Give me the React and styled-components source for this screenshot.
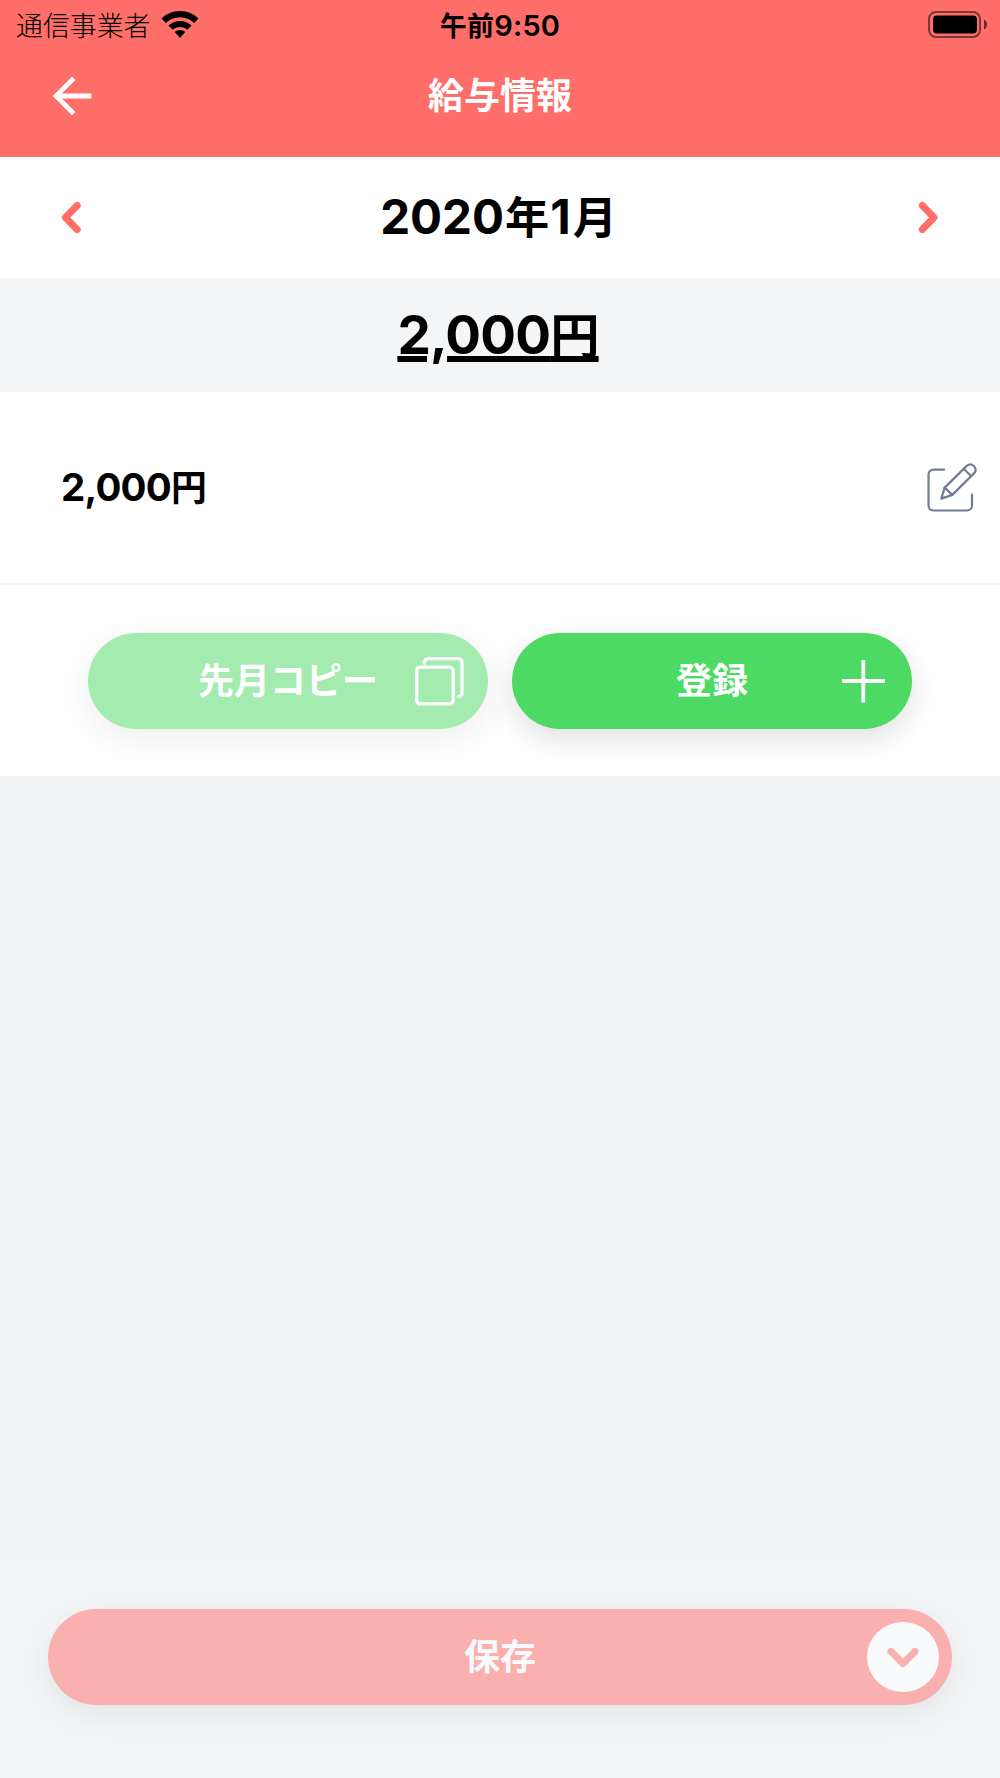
import React from "react";
import styled, { createGlobalStyle } from "styled-components";

const GlobalStyle = createGlobalStyle`
  * {
    box-sizing: border-box;
  }
  body {
    margin: 0;
    background: #f3f4f6;
    font-family: "Inter", "Noto Sans CJK JP", sans-serif;
    color: #000;
  }
  button {
    border: 0;
    padding: 0;
    background: none;
    font: inherit;
    color: inherit;
    cursor: pointer;
  }
  svg {
    display: block;
  }
`;

const Screen = styled.div`
  display: flex;
  flex-direction: column;
  width: 1000px;
  height: 1778px;
  overflow: hidden;
  background: #f3f4f6;
`;

const Header = styled.header`
  height: 157px;
  background: #ff6e69;
`;

const StatusBar = styled.div`
  display: grid;
  grid-template-columns: 1fr auto 1fr;
  align-items: center;
  height: 50px;
  padding: 0 13px 2px 16px;
  line-height: 44px;
`;

const Carrier = styled.div`
  display: flex;
  align-items: center;
  gap: 11px;
`;

const CarrierName = styled.span`
  padding-top: 2px;
  font-size: 26.9px;
  font-weight: 300;
`;

const Clock = styled.div`
  padding: 4px 3px 0 0;
  font-size: 29px;
  font-weight: 600;
  letter-spacing: 0.2px;
`;

/* kanji next to digits are set a little smaller than the digits */
const Kanji = styled.span`
  margin: 0 ${(props) => props.$gap || 0}px;
  font-size: 0.93em;
`;

const BatteryBox = styled.div`
  display: flex;
  justify-content: flex-end;
`;

const NavBar = styled.div`
  display: grid;
  grid-template-columns: 58px 1fr 58px;
  align-items: center;
  height: 92px;
  padding: 0 43px;
`;

const NavTitle = styled.h1`
  margin: 0;
  font-size: 36px;
  line-height: 50px;
  font-weight: 600;
  text-align: center;
  color: #fff;
`;

const MonthBar = styled.div`
  display: flex;
  align-items: center;
  justify-content: space-between;
  height: 121px;
  padding: 0 61px;
  background: #fff;
`;

const Month = styled.div`
  padding-right: 1px;
  font-size: 47.5px;
  line-height: 60px;
  font-weight: 700;
`;

const Total = styled.div`
  height: 114px;
  padding: 24px 4px 0 0;
  background: #f4f5f7;
  text-align: center;
  font-size: 53px;
  line-height: 66px;
  font-weight: 700;
  letter-spacing: -0.8px;
  text-decoration: underline;
  text-decoration-thickness: 6px;
  text-underline-offset: 2px;
`;

const Row = styled.div`
  display: flex;
  align-items: center;
  justify-content: space-between;
  height: 193px;
  padding: 0 23px 0 61px;
  background: #fff;
  border-bottom: 2px solid #f3f4f5;
`;

const Amount = styled.div`
  font-size: 38.5px;
  line-height: 50px;
  font-weight: 700;
  letter-spacing: -0.8px;
`;

const Actions = styled.div`
  display: flex;
  justify-content: center;
  gap: 24px;
  height: 191px;
  padding-top: 48px;
  background: #fff;
`;

const PillButton = styled.button`
  display: grid;
  grid-template-columns: 1fr auto 1fr;
  align-items: center;
  width: ${(props) => props.$width}px;
  height: 96px;
  padding: 0 ${(props) => props.$inset}px;
  border-radius: 48px;
  background: ${(props) => props.$color};
  box-shadow: 0 10px 30px rgba(0, 0, 0, 0.12);
  opacity: ${(props) => (props.disabled ? 0.5 : 1)};
  color: #fff;
`;

const PillLabel = styled.span`
  grid-column: 2;
  padding-bottom: 1px;
  font-size: 36px;
  line-height: 50px;
  font-weight: 600;
`;

const PillIcon = styled.span`
  grid-column: 3;
  justify-self: end;
`;

const Footer = styled.footer`
  display: flex;
  justify-content: center;
  height: 218px;
  margin-top: auto;
  padding-top: 49px;
  background: #f4f5f7;
`;

const WifiIcon = () => (
  <svg width="38" height="28" viewBox="0 0 38 28">
    <path d="M19 0C12 0 5.600 2.700.6 7.600L4.900 12C8.700 8.300 13.600 6.200 19 6.200S29.300 8.300 33.100 12l4.300-4.400C32.400 2.700 26 0 19 0z" />
    <path d="M19 9.900c-4.400 0-8.500 1.700-11.600 4.700l4.200 4.200c2-1.900 4.600-2.900 7.400-2.900s5.400 1 7.400 2.900l4.200-4.200c-3.100-3-7.200-4.700-11.600-4.700z" />
    <path d="M19 19c-1.900 0-3.700.7-5.200 1.900L19 27l5.200-6.100C22.700 19.700 20.900 19 19 19z" />
  </svg>
);

const BatteryIcon = () => (
  <svg width="59" height="27" viewBox="0 0 59 27">
    <rect x="1" y="1" width="51" height="25" rx="7" fill="none" stroke="#000" strokeOpacity="0.5" strokeWidth="2" />
    <rect x="5" y="4.500" width="44" height="18" rx="4" />
    <path d="M56 8.500c1.800.8 3 2.800 3 5s-1.200 4.200-3 5z" fillOpacity="0.6" />
  </svg>
);

const BackIcon = () => (
  <svg width="58" height="58" viewBox="0 0 24 24" fill="#fff">
    <path d="M20 11H7.830l5.590-5.590L12 4l-8 8 8 8 1.410-1.410L7.830 13H20z" />
  </svg>
);

const chevrons = {
  left: "M16.200 3.500 4.500 15.500 16.200 27.500",
  right: "M3.300 3.500 15 15.500 3.300 27.500",
};

const Chevron = ({ to }) => (
  <svg width="20" height="31" viewBox="0 0 20 31" fill="none" stroke="#ff6e69" strokeWidth="7" strokeLinecap="round" strokeLinejoin="round" overflow="visible">
    <path d={chevrons[to]} />
  </svg>
);

const EditIcon = () => (
  <svg width="50" height="50" viewBox="0 0 50 50" fill="none" stroke="#717b93" strokeWidth="2.200" strokeLinecap="round" strokeLinejoin="round">
    <path d="M17.200 6.600H6.500a5 5 0 0 0-5 5V42.500a5 5 0 0 0 5 5H40a5 5 0 0 0 5-5V31.500" />
    <path d="M14.300 35.600 17.700 24.600 40 2.600a5.300 5.300 0 0 1 7.500 7.300L25.300 31.900z" />
    <path d="M17.700 24.600l7.600 7.300M36.700 5.800l7.500 7.400" />
  </svg>
);

const CopyIcon = () => (
  <svg width="49" height="49" viewBox="0 0 49 49" fill="none" stroke="#fff" strokeWidth="3.300" strokeLinecap="round">
    <rect x="1.600" y="10.200" width="36.600" height="36.600" rx="3.500" />
    <path d="M9.200 6V5.600a4 4 0 0 1 4-4H43a4 4 0 0 1 4 4V35.600a4 4 0 0 1-3.600 4" />
  </svg>
);

const PlusIcon = () => (
  <svg width="43" height="43" viewBox="0 0 43 43" stroke="#fff" strokeWidth="3.800">
    <path d="M21.300 0v42.500M0 21h43" />
  </svg>
);

const SaveIcon = () => (
  <svg width="72" height="70" viewBox="0 0 72 70">
    <rect width="72" height="70" rx="35.500" fill="#fff" />
    <path d="M24 29.500 36 41.500 48 29.500" fill="none" stroke="#ff6e69" strokeWidth="7" strokeLinecap="round" strokeLinejoin="round" />
  </svg>
);

const Pill = ({ label, icon, color, width = 400, inset, disabled }) => {
  return (
    <PillButton $color={color} $width={width} $inset={inset} disabled={disabled}>
      <PillLabel>{label}</PillLabel>
      <PillIcon>{icon}</PillIcon>
    </PillButton>
  );
};

const App = () => {
  return (
    <>
      <GlobalStyle />
      <Screen>
        <Header>
          <StatusBar>
            <Carrier>
              <CarrierName>通信事業者</CarrierName>
              <WifiIcon />
            </Carrier>
            <Clock>
              <Kanji>午前</Kanji>9:50
            </Clock>
            <BatteryBox>
              <BatteryIcon />
            </BatteryBox>
          </StatusBar>
          <NavBar>
            <button aria-label="戻る">
              <BackIcon />
            </button>
            <NavTitle>給与情報</NavTitle>
          </NavBar>
        </Header>
        <MonthBar>
          <button aria-label="前月">
            <Chevron to="left" />
          </button>
          <Month>
            2020<Kanji $gap={1}>年</Kanji>1<Kanji $gap={2}>月</Kanji>
          </Month>
          <button aria-label="翌月">
            <Chevron to="right" />
          </button>
        </MonthBar>
        <Total>
          2,000<Kanji>円</Kanji>
        </Total>
        <Row>
          <Amount>
            2,000<Kanji>円</Kanji>
          </Amount>
          <button aria-label="編集">
            <EditIcon />
          </button>
        </Row>
        <Actions>
          <Pill label="先月コピー" icon={<CopyIcon />} color="#4cd964" inset={24} disabled />
          <Pill label="登録" icon={<PlusIcon />} color="#4cd964" inset={27} />
        </Actions>
        <Footer>
          <Pill label="保存" icon={<SaveIcon />} color="#ff6e69" width={904} inset={13} disabled />
        </Footer>
      </Screen>
    </>
  );
};

export default App;
